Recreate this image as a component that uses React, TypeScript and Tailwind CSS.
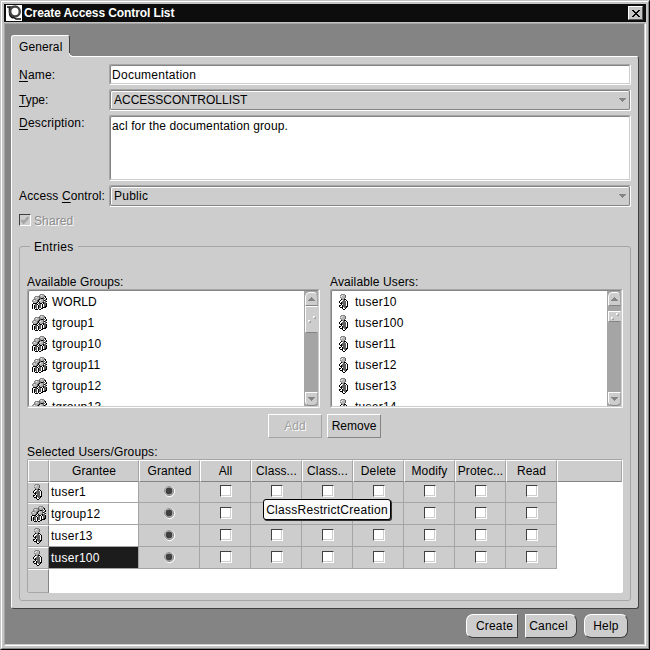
import { ReactNode } from "react";
import clsx from "clsx";

const shades: Record<string, string> = {
    k: "#000000",
    d: "#606060",
    g: "#848484",
    a: "#b4b4b4",
    l: "#e8e8e8",
    w: "#ffffff",
};

const personPixels = [
    "..gggg....",
    ".galaad...",
    ".alaaad...",
    ".gaaaad...",
    "..gaad....",
    "..kggkk...",
    ".kwwddwk..",
    "kwwddddwk.",
    "kwkddddwk.",
    ".kkddddwk.",
    "..kwdddwk.",
    "kkwkdddwk.",
    "kwwkdddkk.",
    ".kkkwddk..",
    "...kwwk...",
    "....kk....",
];

const groupPixels = [
    "........gggg...",
    ".......galaad..",
    "...ggggdaaaadk.",
    "..galaadgaadwk.",
    "..gaaaaddkkddwk",
    ".gggaadkaaadwdk",
    "galaadkalaadkdw",
    "gaaaadkaaaadwdk",
    ".gaadkwkaadkddw",
    ".kkkkwddkkwkddk",
    "kwwddkwddwkwddk",
    "kwkddwkddwkwddk",
    "k.kddwkddwkwdkk",
    "k.kddwkddwkkkk.",
    "k.kwdwkwwkk....",
    "...kkk.kk......",
];

const users = ["tuser10", "tuser100", "tuser11", "tuser12", "tuser13", "tuser14"];
const groups = ["WORLD", "tgroup1", "tgroup10", "tgroup11", "tgroup12", "tgroup13"];
const columns = ["All", "Class...", "Class...", "Delete", "Modify", "Protec...", "Read"];
const grantees = [
    { name: "tuser1", group: false, selected: false },
    { name: "tgroup12", group: true, selected: false },
    { name: "tuser13", group: false, selected: false },
    { name: "tuser100", group: false, selected: true },
];

function PixelIcon({ rows }: { rows: string[] }) {
    return (
        <svg width={rows[0].length} height={rows.length} shapeRendering="crispEdges" className="shrink-0">
            {rows.map((row, y) =>
                row.split("").map((c, x) => c !== "." && <rect key={x + "-" + y} x={x} y={y} width="1" height="1" fill={shades[c]} />)
            )}
        </svg>
    );
}

// sunken two pixel border
function Frame({ className, combo, children }: { className?: string; combo?: boolean; children?: ReactNode }) {
    return (
        <div className={clsx("rounded-[2px] border border-t-[#a5a5a5] border-l-[#a5a5a5] border-b-white border-r-white", className)}>
            <div
                className={clsx(
                    "flex h-full w-full overflow-hidden rounded-[2px] border border-t-[#848484] border-l-[#848484]",
                    combo ? "border-b-[#848484] border-r-[#848484] bg-[#cdcdcd] shadow-[inset_1px_1px_0_#fff]" : "border-b-[#cdcdcd] border-r-[#cdcdcd] bg-white"
                )}
            >
                {children}
            </div>
        </div>
    );
}

function Combo({ value }: { value: string }) {
    return (
        <Frame combo className="h-[22px] w-[522px]">
            <div className="flex flex-1 items-center justify-between pl-[3px] pr-[3px]">
                <span className={value === "Public" ? "tracking-[0.25px]" : "tracking-[0px]"}>{value}</span>
                <svg width="7" height="4" shapeRendering="crispEdges">
                    <path d="M0 0h7v1H6v1H5v1H4v1H3V3H2V2H1V1H0z" fill="#848484" />
                </svg>
            </div>
        </Frame>
    );
}

function ScrollButton({ down }: { down?: boolean }) {
    return (
        <div
            className={clsx(
                "flex h-[14px] w-[13px] shrink-0 items-center justify-center border border-t-white border-l-white border-b-[#848484] border-r-[#a5a5a5] bg-[#cdcdcd]",
                down ? "rounded-b-[5px]" : "rounded-t-[5px]"
            )}
        >
            <svg width="7" height="4" shapeRendering="crispEdges">
                <path d={down ? "M0 0h7v1H6v1H5v1H4v1H3V3H2V2H1V1H0z" : "M3 0h1v1h1v1h1v1h1v1H0V3h1V2h1V1h1z"} fill="#848484" />
            </svg>
        </div>
    );
}

function ListBox({ title, items, icon, small }: { title: string; items: string[]; icon: string[]; small?: boolean }) {
    return (
        <div className="w-[293px]">
            <div className="h-[15px] pt-px leading-[15px] tracking-[0.12px]">{title}</div>
            <Frame className="h-[119px]">
                <div className="flex-1 overflow-hidden">
                    {items.map((item) => (
                        <div key={item} className="flex h-[21px] items-center">
                            <div className={clsx("flex w-[23px] pt-px", small ? "pl-[7px]" : "pl-[3px]")}>
                                <PixelIcon rows={icon} />
                            </div>
                            <span className={item === "WORLD" ? "tracking-[0px]" : "tracking-[0.25px]"}>{item}</span>
                        </div>
                    ))}
                </div>
                <div className="-mr-px flex w-[15px] flex-col items-center bg-[#a5a5a5] pt-px">
                    <ScrollButton />
                    <div
                        className={clsx(
                            "flex w-[13px] items-center justify-center border border-t-white border-l-white border-b-[#848484] border-r-[#cdcdcd] bg-[#cdcdcd]",
                            small ? "mt-[5px] h-[11px]" : "h-[27px]"
                        )}
                    >
                        <svg width="9" height="7" shapeRendering="crispEdges">
                            <path d="M1 4h2v1H2v1H1zM6 0h2v1H7v1H6z" fill="#fff" />
                            <path d="M3 5h1v2H2V6h1zM8 1h1v2H7V2h1z" fill="#a5a5a5" />
                        </svg>
                    </div>
                    <div className="flex-1" />
                    <ScrollButton down />
                </div>
            </Frame>
        </div>
    );
}

function CheckBox() {
    return (
        <div className="h-[12px] w-[12px] border border-t-[#404040] border-l-[#404040] border-b-white border-r-white">
            <div className="h-full w-full border-r border-b border-[#cdcdcd] bg-white" />
        </div>
    );
}

function Radio() {
    return (
        <svg width="13" height="13">
            <circle cx="6.5" cy="6.5" r="5.2" fill="none" stroke="#fff" />
            <circle cx="6" cy="6" r="4.6" fill="#cdcdcd" stroke="#848484" strokeWidth=".8" />
            <circle cx="6" cy="6" r="3.4" fill="#404040" />
        </svg>
    );
}

function HeaderCell({ className, children }: { className: string; children?: ReactNode }) {
    return (
        <div
            className={clsx(
                "flex h-[22px] shrink-0 items-center justify-center border border-t-white border-l-white border-r-[#a5a5a5] border-b-[#848484] bg-[#cdcdcd] tracking-[0.1px]",
                className
            )}
        >
            {children}
        </div>
    );
}

function DialogButton({ className, children }: { className: string; children: ReactNode }) {
    return (
        <button
            className={clsx(
                "flex h-[24px] items-center justify-center border border-t-white border-l-white border-b-[#404040] border-r-[#404040] bg-[#cdcdcd] tracking-[0.2px]",
                className
            )}
        >
            {children}
        </button>
    );
}

export default function App() {
    return (
        <div className="h-[650px] w-[650px] border border-t-[#c4c4c4] border-l-[#c4c4c4] border-r-black border-b-black font-['Liberation_Sans',Arial,sans-serif] text-[12px] leading-[14px] text-black">
            <div className="flex h-full flex-col border border-t-white border-l-white border-r-[#848484] border-b-[#848484] bg-[#c4c4c4] p-[2px]">
                {/* title bar */}
                <div className="flex h-[18px] shrink-0 items-center bg-[#0d0d0d] pl-[2px] pr-[3px]">
                    <svg width="16" height="16" className="bg-white">
                        <path d="M1 2h7M3.5 2v5q0 5 4 6" fill="none" stroke="#111" strokeWidth="1.6" />
                        <ellipse cx="9" cy="6.5" rx="4.8" ry="5" fill="none" stroke="#444" strokeWidth="2.4" />
                        <path d="M7 12l3 2h5" fill="none" stroke="#111" strokeWidth="1.5" />
                    </svg>
                    <span className="ml-[2px] flex-1 font-bold tracking-[-0.1px] text-white">Create Access Control List</span>
                    <div className="flex h-[14px] w-[15px] items-center justify-center border border-t-white border-l-white border-r-[#555] border-b-[#555] bg-[#c4c4c4]">
                        <svg width="8" height="7" shapeRendering="crispEdges">
                            <path d="M0 0h2v1h1v1h2V1h1V0h2v1H7v1H6v1H5v1h1v1h1v1h1v1H6V6H5V5H3v1H2v1H0V6h1V5h1V4h1V3H2V2H1V1H0z" fill="#000" />
                        </svg>
                    </div>
                </div>

                <div className="mt-px flex-1 border border-t-[#a5a5a5] border-l-[#a5a5a5] border-r-white border-b-white">
                    <div className="h-full border-r border-b border-[#cdcdcd] bg-[#848484] pl-[6px] pt-[11px]">
                        {/* tab */}
                        <div className="relative z-10 flex h-[22px] w-[59px] items-center rounded-tl-[3px] rounded-tr-[3px] border-t border-r border-l border-t-white border-l-white border-r-[#404040] bg-[#cdcdcd] pl-[7px] tracking-[0.1px]">
                            General
                            <svg width="4" height="4" shapeRendering="crispEdges" className="absolute -right-[4px] bottom-0">
                                <path d="M0 0h1v2h2v2H0z" fill="#cdcdcd" />
                                <path d="M0 1h1v1H0zM1 2h1v1H1zM2 3h2v1H2z" fill="#fff" />
                            </svg>
                        </div>
                        <div className="-mt-px h-[553px] w-[628px] rounded-[3px] rounded-tl-none border border-t-white border-l-white border-r-[#404040] border-b-[#404040] bg-[#cdcdcd] pl-[7px] pt-[7px]">
                            <div className="grid grid-cols-[90px_522px] gap-y-[4px]">
                                <label className="pt-[4px] tracking-[0.2px]">
                                    <u className="underline-offset-2">N</u>ame:
                                </label>
                                <Frame className="h-[21px] w-[522px]">
                                    <span className="pl-px pt-[2px] tracking-[0.27px]">Documentation</span>
                                </Frame>
                                <label className="pt-[4px]">
                                    <u className="underline-offset-2">T</u>ype:
                                </label>
                                <Combo value="ACCESSCONTROLLIST" />
                                <label className="pt-px tracking-[0.2px]">
                                    <u className="underline-offset-2">D</u>escription:
                                </label>
                                <Frame className="h-[66px] w-[522px]">
                                    <span className="pl-px pt-[2px] tracking-[0.12px]">acl for the documentation group.</span>
                                </Frame>
                                <label className="whitespace-nowrap pt-[4px] tracking-[0.13px]">
                                    Access <u className="underline-offset-2">C</u>ontrol:
                                </label>
                                <Combo value="Public" />
                            </div>

                            <div className="mt-[7px] flex h-[12px] items-center gap-[3px]">
                                <div className="h-[12px] w-[12px] border border-t-[#404040] border-l-[#404040] border-b-white border-r-white">
                                    <svg width="10" height="10">
                                        <path d="M1.5 5l2.2 2.5L8.5 2" fill="none" stroke="#a5a5a5" strokeWidth="2.5" />
                                    </svg>
                                </div>
                                <span className="pt-px text-[#8c8c8c] tracking-[0.1px] [text-shadow:1px_1px_0_#fff]">Shared</span>
                            </div>

                            <div className="mt-[20px] h-[355px] w-[612px] rounded-[3px] border border-[#a5a5a5] pl-[7px]">
                                <div className="-mt-[7px] ml-[3px] h-[15px] w-[48px] bg-[#cdcdcd] pl-[4px] leading-[15px] tracking-[0.3px]">Entries</div>
                                <div className="mt-[19px] flex gap-[10px]">
                                    <ListBox title="Available Groups:" items={groups} icon={groupPixels} />
                                    <ListBox title="Available Users:" items={users} icon={personPixels} small />
                                </div>

                                <div className="mt-[6px] flex gap-[5px] pl-[241px]">
                                    <button className="h-[24px] w-[54px] rounded-[1px] border border-t-white border-l-white border-r-[#a5a5a5] border-b-[#a5a5a5] text-[#a0a0a0] [text-shadow:1px_1px_0_#fff]">
                                        Add
                                    </button>
                                    <button className="h-[24px] w-[54px] rounded-[1px] border border-t-white border-l-white border-r-[#848484] border-b-[#848484]">
                                        Remove
                                    </button>
                                </div>

                                <div className="mt-[6px] h-[15px] pt-px leading-[15px] tracking-[0.15px]">Selected Users/Groups:</div>
                                <div className="relative h-[134px] w-[596px] overflow-hidden rounded-[2px] border-t border-l border-r border-t-[#a5a5a5] border-l-[#a5a5a5] border-r-white bg-white">
                                    <div className="flex">
                                        <HeaderCell className="w-[21px]" />
                                        <HeaderCell className="w-[90px]">Grantee</HeaderCell>
                                        <HeaderCell className="w-[61px]">Granted</HeaderCell>
                                        {columns.map((col, i) => (
                                            <HeaderCell key={i} className="w-[51px]">
                                                {col}
                                            </HeaderCell>
                                        ))}
                                        <HeaderCell className="w-[65px]" />
                                    </div>
                                    {grantees.map((g, i) => (
                                        <div key={g.name} className={clsx("flex", i === 0 ? "h-[21px]" : "h-[22px] [&>div]:pt-[4px]")}>
                                            <div className="flex w-[21px] items-end justify-center border-t border-r border-b border-t-white border-r-[#848484] border-b-[#a5a5a5] bg-[#cdcdcd] pb-[2px]">
                                                <PixelIcon rows={g.group ? groupPixels : personPixels} />
                                            </div>
                                            <div
                                                className={clsx(
                                                    "flex w-[90px] items-start border-r border-b border-[#a5a5a5] pl-[2px] pt-[3px] tracking-[0.25px]",
                                                    g.selected ? "bg-[#1c1c1c] text-white" : "bg-white"
                                                )}
                                            >
                                                {g.name}
                                            </div>
                                            <div className="flex w-[61px] justify-center border-r border-b border-[#a5a5a5] bg-[#cdcdcd] pt-[3px]">
                                                <Radio />
                                            </div>
                                            {columns.map((_, j) => (
                                                <div key={j} className="flex w-[51px] border-r border-b border-[#a5a5a5] bg-[#cdcdcd] pl-[20px] pt-[3px]">
                                                    <CheckBox />
                                                </div>
                                            ))}
                                        </div>
                                    ))}
                                    <div className="h-[24px] w-[21px] border-t border-r border-b border-t-white border-r-[#848484] border-b-[#a5a5a5] bg-[#cdcdcd]" />
                                    {/* tooltip */}
                                    <div className="absolute left-[235px] top-[39px] flex h-[21px] w-[128px] items-center justify-center rounded-[3px] border border-black bg-[#fafafa] tracking-[0.27px] shadow-[1px_1px_0_#333]">
                                        ClassRestrictCreation
                                    </div>
                                </div>
                            </div>
                        </div>

                        <div className="mt-[5px] flex pl-[455px]">
                            <DialogButton className="w-[52px] rounded-l-[7px] rounded-r-[1px] pl-[5px]">Create</DialogButton>
                            <DialogButton className="ml-[7px] w-[52px] rounded-l-[1px] rounded-r-[7px] pr-[5px]">Cancel</DialogButton>
                            <DialogButton className="ml-[7px] w-[44px] rounded-[7px]">Help</DialogButton>
                        </div>
                    </div>
                </div>
            </div>
        </div>
    );
}
